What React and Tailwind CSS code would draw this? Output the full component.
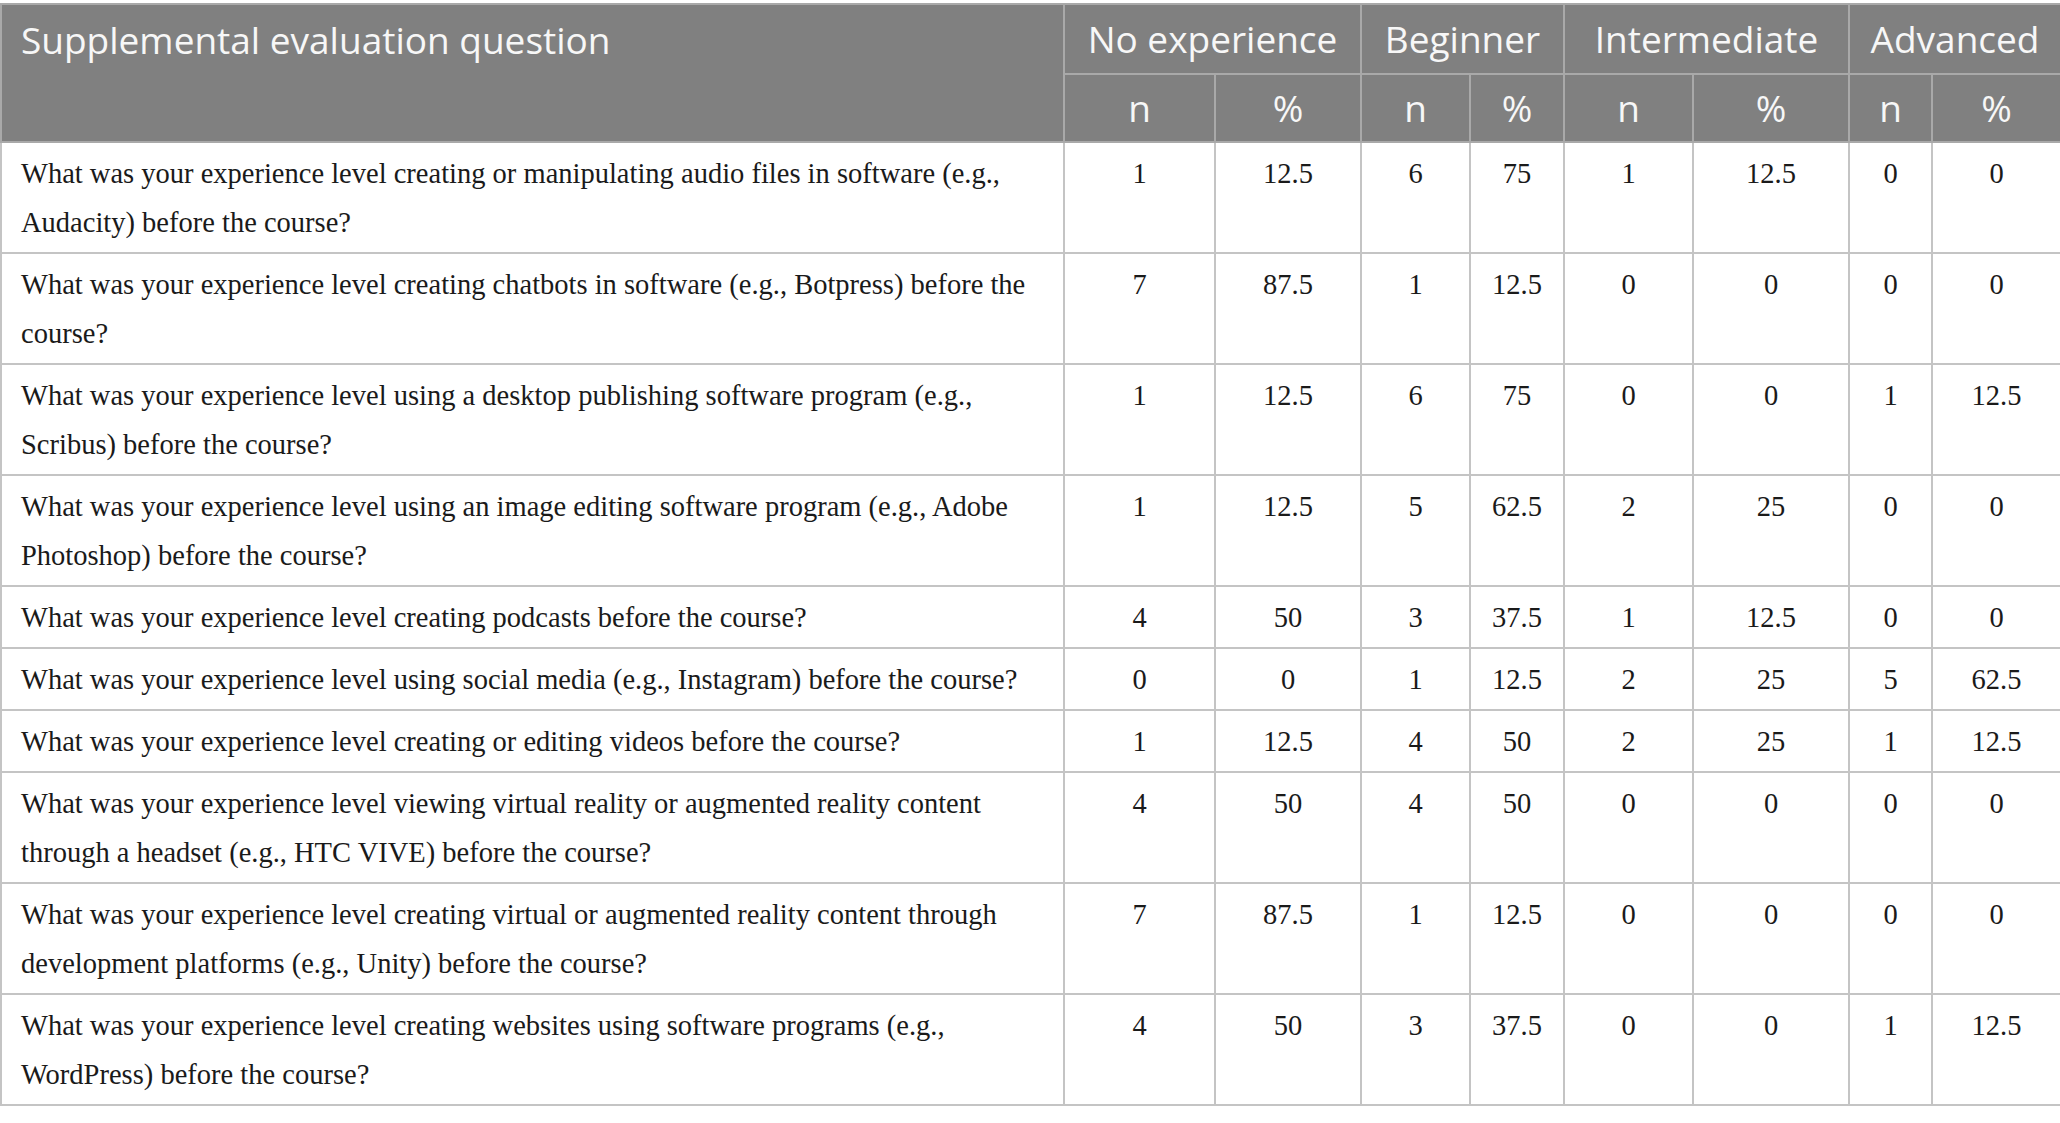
import React from "react";

const rows = [
  {
    q: "What was your experience level creating or manipulating audio files in software (e.g., Audacity) before the course?",
    v: ["1", "12.5", "6", "75", "1", "12.5", "0", "0"],
  },
  {
    q: "What was your experience level creating chatbots in software (e.g., Botpress) before the course?",
    v: ["7", "87.5", "1", "12.5", "0", "0", "0", "0"],
  },
  {
    q: "What was your experience level using a desktop publishing software program (e.g., Scribus) before the course?",
    v: ["1", "12.5", "6", "75", "0", "0", "1", "12.5"],
  },
  {
    q: "What was your experience level using an image editing software program (e.g., Adobe Photoshop) before the course?",
    v: ["1", "12.5", "5", "62.5", "2", "25", "0", "0"],
  },
  {
    q: "What was your experience level creating podcasts before the course?",
    v: ["4", "50", "3", "37.5", "1", "12.5", "0", "0"],
  },
  {
    q: "What was your experience level using social media (e.g., Instagram) before the course?",
    v: ["0", "0", "1", "12.5", "2", "25", "5", "62.5"],
  },
  {
    q: "What was your experience level creating or editing videos before the course?",
    v: ["1", "12.5", "4", "50", "2", "25", "1", "12.5"],
  },
  {
    q: "What was your experience level viewing virtual reality or augmented reality content through a headset (e.g., HTC VIVE) before the course?",
    v: ["4", "50", "4", "50", "0", "0", "0", "0"],
  },
  {
    q: "What was your experience level creating virtual or augmented reality content through development platforms (e.g., Unity) before the course?",
    v: ["7", "87.5", "1", "12.5", "0", "0", "0", "0"],
  },
  {
    q: "What was your experience level creating websites using software programs (e.g., WordPress) before the course?",
    v: ["4", "50", "3", "37.5", "0", "0", "1", "12.5"],
  },
];

const groups = ["No experience", "Beginner", "Intermediate", "Advanced"];

export default function App() {
  return (
    <div className="bg-white pt-[3px]">
      <table className="w-[2060px] table-fixed border-collapse">
        <colgroup>
          <col className="w-[1063px]" />
          <col className="w-[151px]" />
          <col className="w-[146px]" />
          <col className="w-[109px]" />
          <col className="w-[94px]" />
          <col className="w-[129px]" />
          <col className="w-[156px]" />
          <col className="w-[83px]" />
          <col className="w-[129px]" />
        </colgroup>
        <thead className="bg-[#808080] text-[#f7f7f7] font-['Open_Sans',sans-serif]">
          <tr className="h-[70px]">
            <th
              rowSpan={2}
              className="border-2 border-[#a9a9a9] pl-[19px] pr-[10px] pt-[9px] text-left align-top text-[37px] font-normal leading-[52px]"
            >
              Supplemental evaluation question
            </th>
            {groups.map((g) => (
              <th
                key={g}
                colSpan={2}
                className="border-2 border-[#a9a9a9] text-center align-middle text-[37px] font-normal whitespace-nowrap"
              >
                {g}
              </th>
            ))}
          </tr>
          <tr className="h-[68px]">
            {groups.map((g) => (
              <React.Fragment key={g}>
                <th className="border-2 border-[#a9a9a9] text-center align-middle text-[37px] font-normal">
                  n
                </th>
                <th className="border-2 border-[#a9a9a9] text-center align-middle text-[37px] font-normal">
                  %
                </th>
              </React.Fragment>
            ))}
          </tr>
        </thead>
        <tbody className="text-[#1a1a1a] font-['Liberation_Serif',serif] text-[28.5px] leading-[49px]">
          {rows.map((r, i) => (
            <tr key={i}>
              <td className="border-2 border-[#c4c4c4] pl-[19px] pr-[8px] pt-[6px] pb-[5px] align-top">
                {r.q}
              </td>
              {r.v.map((x, j) => (
                <td
                  key={j}
                  className="border-2 border-[#c4c4c4] pt-[6px] pb-[5px] text-center align-top"
                >
                  {x}
                </td>
              ))}
            </tr>
          ))}
        </tbody>
      </table>
    </div>
  );
}
